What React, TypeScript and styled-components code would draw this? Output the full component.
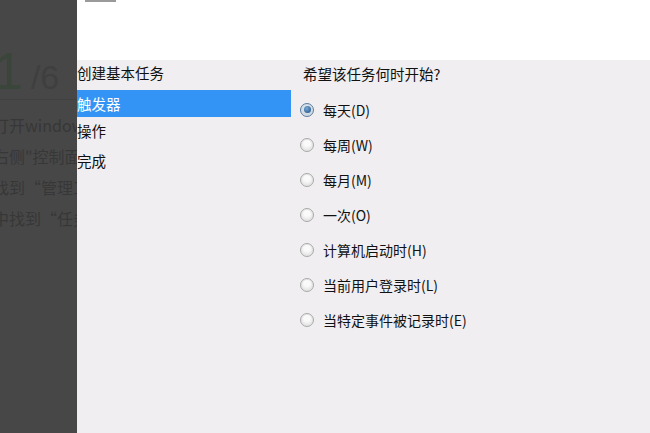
import styled, { createGlobalStyle } from 'styled-components';

const Global = createGlobalStyle`
  html, body {
    margin: 0;
    padding: 0;
    width: 650px;
    height: 433px;
    overflow: hidden;
    font-family: "Noto Sans CJK SC", "Microsoft YaHei", sans-serif;
  }
`

const Screen = styled.div`
  display: flex;
  width: 650px;
  height: 433px;
`

const BackPage = styled.div`
  width: 77px;
  flex-shrink: 0;
  background-color: #474747;
  overflow: hidden;
  display: flex;
  flex-direction: column;
  padding-top: 48px;
  box-sizing: border-box;
`

const Counter = styled.div`
  display: flex;
  align-items: baseline;
  height: 51px;
  margin-left: -6px;
  border-bottom: 1px solid #414141;
  font-family: "Liberation Sans", Arial, sans-serif;
  white-space: nowrap;

  b {
    font-weight: normal;
    font-size: 52px;
    line-height: 46px;
    color: #3a4639;
  }

  span {
    font-size: 34px;
    margin-left: 8px;
    color: #3f3f3f;
  }
`

const StepList = styled.div`
  display: flex;
  flex-direction: column;
  row-gap: 10px;
  margin-top: 15px;
  margin-left: -7px;
`

const Step = styled.p`
  margin: 0;
  font-size: 16px;
  line-height: 21px;
  color: #373737;
  white-space: nowrap;
`

const Dialog = styled.div`
  flex: 1;
  display: flex;
  flex-direction: column;
  background-color: #f0eef1;
`

const Header = styled.div`
  height: 60px;
  background-color: #ffffff;
  flex-shrink: 0;

  &::before {
    content: "";
    display: block;
    width: 31px;
    height: 2px;
    margin-left: 8px;
    background-color: #9a9a9a;
  }
`

const Body = styled.div`
  flex: 1;
  display: grid;
  grid-template-columns: 214px 1fr;
`

const Nav = styled.div`
  display: flex;
  flex-direction: column;
`

const NavItem = styled.div<{ $active?: boolean }>`
  height: 27px;
  margin-bottom: 3px;
  display: flex;
  align-items: center;
  font-size: 14.5px;
  color: ${p => (p.$active ? '#ffffff' : '#111111')};
  background-color: ${p => (p.$active ? '#3394f6' : 'transparent')};
  white-space: nowrap;

  &:first-child {
    height: 24px;
    margin-bottom: 6px;
  }

  &:nth-child(2) {
    margin-bottom: 0;
  }
`

const Content = styled.div`
  display: flex;
  flex-direction: column;
  padding-left: 9px;
  padding-top: 3px;
`

const Question = styled.h3`
  margin: 0 0 7px 3px;
  font-weight: normal;
  font-size: 14.5px;
  line-height: 22px;
  color: #111111;
`

const Option = styled.label`
  display: flex;
  align-items: center;
  height: 35px;
  column-gap: 9px;
  font-size: 14px;
  color: #111111;
  white-space: nowrap;
`

const Radio = styled.span<{ $checked?: boolean }>`
  width: 14px;
  height: 14px;
  border-radius: 50%;
  box-sizing: border-box;
  display: flex;
  align-items: center;
  justify-content: center;
  border: 1px solid ${p => (p.$checked ? '#5a7c9c' : '#a9a9a9')};
  background: ${p =>
    p.$checked
      ? 'radial-gradient(circle at 50% 40%, #eef2f6, #b6c6d4)'
      : 'radial-gradient(circle at 50% 35%, #fafafa 30%, #d6d6d6)'};
  box-shadow: inset 0 0 0 1px ${p => (p.$checked ? '#d5e0ea' : '#e6e6e6')};

  &::after {
    content: "";
    display: ${p => (p.$checked ? 'block' : 'none')};
    width: 7px;
    height: 7px;
    border-radius: 50%;
    background: radial-gradient(circle at 40% 35%, #75a9da, #1b4c7c);
  }
`

const steps = ['打开windows', '右侧"控制面板', '找到“管理工具', '中找到“任务计划']
const navs = ['创建基本任务', '触发器', '操作', '完成']
const options = [
  '每天(D)',
  '每周(W)',
  '每月(M)',
  '一次(O)',
  '计算机启动时(H)',
  '当前用户登录时(L)',
  '当特定事件被记录时(E)',
]

export default function App() {
  return (
    <Screen>
      <Global />
      <BackPage>
        <Counter>
          <b>1</b>
          <span>/6</span>
        </Counter>
        <StepList>
          {steps.map(s => (
            <Step key={s}>{s}</Step>
          ))}
        </StepList>
      </BackPage>
      <Dialog>
        <Header />
        <Body>
          <Nav>
            {navs.map((n, i) => (
              <NavItem key={n} $active={i === 1}>{n}</NavItem>
            ))}
          </Nav>
          <Content>
            <Question>希望该任务何时开始?</Question>
            {options.map((o, i) => (
              <Option key={o}>
                <Radio $checked={i === 0} />
                {o}
              </Option>
            ))}
          </Content>
        </Body>
      </Dialog>
    </Screen>
  )
}
